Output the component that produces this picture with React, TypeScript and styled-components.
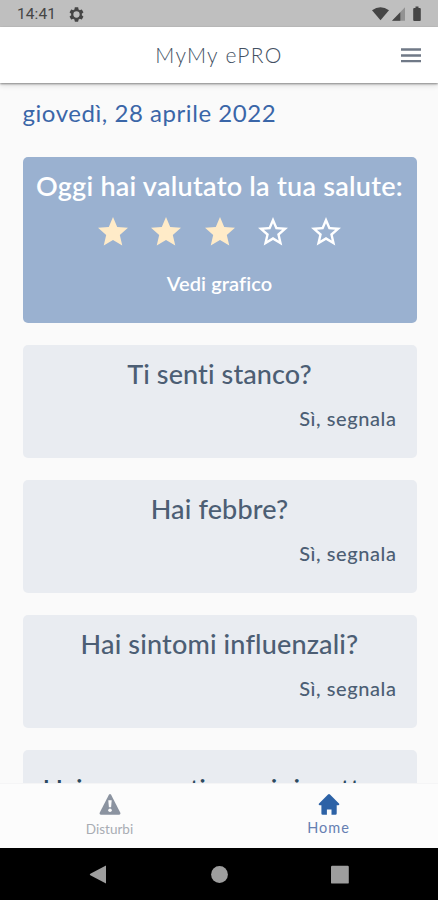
import React from "react";
import styled, { createGlobalStyle } from "styled-components";

const Global = createGlobalStyle`
  * { box-sizing: border-box; }
  body { margin: 0; background: #fafafa; font-family: Lato, "Noto Sans", sans-serif; }
`;

const Screen = styled.div`
  display: flex;
  flex-direction: column;
  width: 438px;
  height: 900px;
  overflow: hidden;
  background: #fafafa;
`;

const StatusBar = styled.div`
  display: flex;
  flex: none;
  align-items: center;
  height: 27px;
  padding: 1px 15px 0 17px;
  background: #bfbfbf;
  color: #454545;
`;

const Clock = styled.span`
  width: 52px;
  font: 400 15.5px/26px Roboto, sans-serif;
  letter-spacing: 0.1px;
`;

const StatusIcons = styled.div`
  display: flex;
  align-items: center;
  margin-left: auto;
`;

const AppBar = styled.header`
  display: grid;
  flex: none;
  grid-template-columns: 40px 1fr 40px;
  align-items: center;
  height: 56px;
  padding-right: 7px;
  padding-left: 7px;
  background: #fff;
  box-shadow: 0 1px 2px rgba(0, 0, 0, 0.42), 0 3px 5px rgba(0, 0, 0, 0.1);
  z-index: 1;
`;

const AppTitle = styled.h1`
  grid-column: 2;
  margin: 0;
  color: #425062;
  font-size: 21px;
  font-weight: 300;
  line-height: 54px;
  letter-spacing: 1.3px;
  text-align: center;
`;

const MenuButton = styled.button`
  display: flex;
  justify-content: center;
  padding: 0;
  border: 0;
  background: none;
`;

const Content = styled.main`
  display: flex;
  flex: 1;
  flex-direction: column;
  min-height: 0;
  padding: 14px 21.5px 0 22.5px;
  overflow: hidden;
`;

const DateLine = styled.h2`
  flex: none;
  margin: 0 0 27.5px;
  color: #3a66a8;
  font-size: 24px;
  font-weight: 400;
  line-height: 32px;
  letter-spacing: 0.55px;
`;

const Card = styled.section<{ $rating?: boolean }>`
  display: flex;
  flex: none;
  flex-direction: column;
  align-items: center;
  height: ${(p) => (p.$rating ? 166 : 112.5)}px;
  margin-bottom: 22.5px;
  border-radius: 5px;
  background: ${(p) => (p.$rating ? "#9ab1d0" : "#e9ecf1")};
  color: ${(p) => (p.$rating ? "#fff" : "#4c5e74")};
`;

const CardTitle = styled.h3<{ $spacing: number; $top?: number; $strong?: boolean }>`
  margin: ${(p) => p.$top ?? 11.5}px 0 0;
  font-size: 27px;
  font-weight: ${(p) => (p.$strong ? 600 : 500)};
  line-height: 33px;
  letter-spacing: ${(p) => p.$spacing}px;
  white-space: nowrap;
`;

const LongTitle = styled(CardTitle)`
  align-self: flex-start;
  padding-left: 20px;
  color: #2c4a60;
`;

const Stars = styled.div`
  display: flex;
  gap: 17.4px;
  margin: 12.3px 0 0;
`;

const ChartLink = styled.a`
  margin-top: 20.5px;
  font-size: 20px;
  font-weight: 600;
  line-height: 26px;
  letter-spacing: 0.1px;
`;

const ReportLink = styled.a`
  align-self: flex-end;
  margin: 15.5px 20px 0 0;
  font-size: 20px;
  font-weight: 500;
  line-height: 26px;
  letter-spacing: 0.58px;
`;

const TabBar = styled.nav`
  display: grid;
  flex: none;
  grid-template-columns: 1fr 1fr;
  height: 64.5px;
  border-top: 1px solid #f5f5f6;
  background: #fcfcfc;
`;

const Tab = styled.a<{ $active?: boolean }>`
  display: flex;
  flex-direction: column;
  align-items: center;
  padding-top: 9px;
  color: ${(p) => (p.$active ? "#6680b2" : "#a8acb3")};
  font-size: ${(p) => (p.$active ? 14.5 : 13.5)}px;
  line-height: ${(p) => (p.$active ? 24 : 27)}px;
  letter-spacing: ${(p) => (p.$active ? 1 : 0)}px;
`;

const SystemNav = styled.div`
  display: flex;
  flex: none;
  align-items: flex-start;
  justify-content: space-between;
  height: 52.5px;
  padding: 17px 89px 0 89px;
  background: #000;
`;

const STAR = "M12 17.27 18.18 21l-1.64-7.03L22 9.24l-7.19-.61L12 2 9.19 8.63 2 9.24l5.46 4.73L5.82 21z";
const STAR_OUTLINE =
  "M22 9.24l-7.19-.62L12 2 9.19 8.63 2 9.24l5.46 4.73L5.82 21 12 17.27 18.18 21l-1.63-7.03L22 9.24zM12 15.4l-3.76 2.27 1-4.28-3.32-2.88 4.38-.38L12 6.1l1.71 4.04 4.38.38-3.32 2.88 1 4.28L12 15.4z";
const GEAR =
  "M19.43 12.98c.04-.32.07-.64.07-.98s-.03-.66-.07-.98l2.11-1.65c.19-.15.24-.42.12-.64l-2-3.46c-.12-.22-.39-.3-.61-.22l-2.49 1c-.52-.4-1.08-.73-1.69-.98l-.38-2.65C14.46 2.18 14.25 2 14 2h-4c-.25 0-.46.18-.49.42l-.38 2.65c-.61.25-1.17.59-1.69.98l-2.49-1c-.23-.09-.49 0-.61.22l-2 3.46c-.13.22-.07.49.12.64l2.11 1.65c-.04.32-.07.65-.07.98s.03.66.07.98l-2.11 1.65c-.19.15-.24.42-.12.64l2 3.46c.12.22.39.3.61.22l2.49-1c.52.4 1.08.73 1.69.98l.38 2.65c.03.24.24.42.49.42h4c.25 0 .46-.18.49-.42l.38-2.65c.61-.25 1.17-.59 1.69-.98l2.49 1c.23.09.49 0 .61-.22l2-3.46c.12-.22.07-.49-.12-.64l-2.11-1.65zM12 16.4a4.4 4.4 0 1 1 0-8.8 4.4 4.4 0 0 1 0 8.8z";

const questions = [
  { title: "Ti senti stanco?", spacing: 0.1 },
  { title: "Hai febbre?", spacing: 0.15 },
  { title: "Hai sintomi influenzali?", spacing: 0.16 },
];

export default function App() {
  return (
    <Screen>
      <Global />
      <StatusBar>
        <Clock>14:41</Clock>
        <svg width="15" height="15" viewBox="1.5 1.5 21 21" fill="#454545"><path d={GEAR} /></svg>
        <StatusIcons>
          <svg width="51" height="16" viewBox="0 0 51 16">
            <path d="M0 4.2Q8.5-1.8 17 4.2L8.5 14.2Z" fill="#454545" />
            <path d="M33 1.3V14.8H20Z" fill="#929292" />
            <path d="M28.3 6.2V14.8H20Z" fill="#454545" />
            <path d="M43.5.5h3v1.6h1.3q1 0 1 1v11q0 1-1 1h-5.600q-1 0-1-1v-11q0-1 1-1h1.300z" fill="#454545" />
          </svg>
        </StatusIcons>
      </StatusBar>
      <AppBar>
        <AppTitle>MyMy ePRO</AppTitle>
        <MenuButton aria-label="Menu">
          <svg width="20" height="15" viewBox="0 0 20 15" stroke="#707987" strokeWidth="2.300">
            <path d="M0 1.500H20M0 7.500H20M0 13.200H20" />
          </svg>
        </MenuButton>
      </AppBar>
      <Content>
        <DateLine>giovedì, 28 aprile 2022</DateLine>
        <Card $rating>
          <CardTitle $strong $top={12} $spacing={0.25}>Oggi hai valutato la tua salute:</CardTitle>
          <Stars>
            {[1, 2, 3, 4, 5].map((n) => (
              <svg key={n} width="36" height="36" viewBox="0 0 24 24" fill={n <= 3 ? "#ffebc8" : "#fff"}>
                <path d={n <= 3 ? STAR : STAR_OUTLINE} />
              </svg>
            ))}
          </Stars>
          <ChartLink>Vedi grafico</ChartLink>
        </Card>
        {questions.map((q) => (
          <Card key={q.title}>
            <CardTitle $spacing={q.spacing}>{q.title}</CardTitle>
            <ReportLink>Sì, segnala</ReportLink>
          </Card>
        ))}
        <Card>
          <LongTitle $top={22} $spacing={-0.18}>Hai commenti nuovi rispetto a</LongTitle>
        </Card>
      </Content>
      <TabBar>
        <Tab>
          <svg width="22" height="23" viewBox="0 0 22 23">
            <path d="M9.900 1.700Q11 .2 12.100 1.700L21.200 19.600Q22 21.700 20 21.700H2Q0 21.700.8 19.600Z" fill="#8b93a0" />
            <path d="M9.300 7.200h3.400l-.6 7h-2.200z" fill="#fcfcfc" />
            <circle cx="11" cy="17.300" r="1.800" fill="#fcfcfc" />
          </svg>
          Disturbi
        </Tab>
        <Tab $active>
          <svg width="22" height="23" viewBox="0 0 22 23" fill="#2d62a6">
            <path d="M10 1.600Q11 .6 12 1.600L21.200 10.800Q21.700 12.200 20.400 12.300H18.700V20.500Q18.700 21.800 17.400 21.800H13.500V16.500H8.900V21.800H4.700Q3.400 21.800 3.400 20.500V12.300H1.600Q.3 12.200.8 10.800Z" />
          </svg>
          Home
        </Tab>
      </TabBar>
      <SystemNav>
        <svg width="17" height="19" viewBox="0 0 17 19"><path d="M17 .5V18.500L1.300 10.300Q.2 9.500 1.300 8.700Z" fill="#9e9e9e" /></svg>
        <svg width="19" height="19" viewBox="-1 0 19 19"><circle cx="9.500" cy="9.500" r="8.400" fill="#9e9e9e" /></svg>
        <svg width="18" height="19" viewBox="0 0 18 19"><rect x="0" y=".8" width="17.800" height="17.800" rx="1.200" fill="#9e9e9e" /></svg>
      </SystemNav>
    </Screen>
  );
}
